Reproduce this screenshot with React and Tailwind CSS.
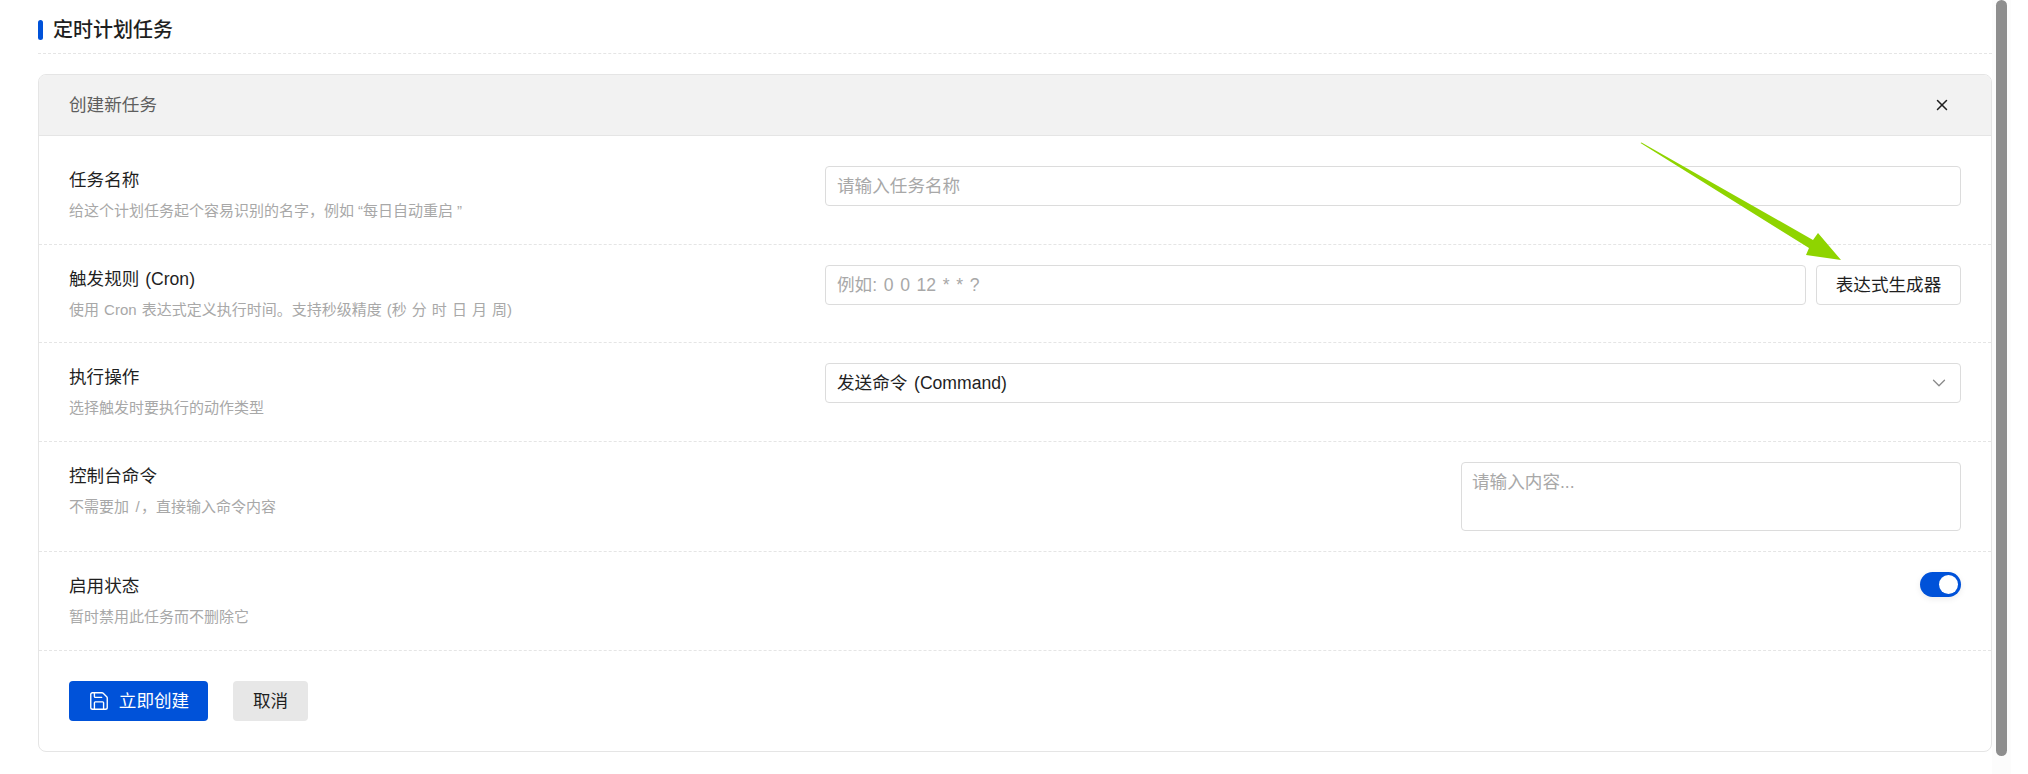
import React from "react";
import { Save, ChevronDown, X } from "lucide-react";

const font = "font-['Liberation_Sans','Noto_Sans_CJK_SC',sans-serif]";

function Row({ label, desc, children, className = "pt-[20px]" }) {
  return (
    <div className={`flex justify-between border-b border-dashed border-[#e5e5e5] px-[30px] ${className}`}>
      <div className="flex flex-col">
        <div className="text-[17.6px] leading-[28px] text-[#1f1f1f] [word-spacing:0.05em]">{label}</div>
        <div className="mt-[6px] text-[15px] leading-[22px] text-[#a8a8a8] [word-spacing:0.06em]">{desc}</div>
      </div>
      {children}
    </div>
  );
}

const inputCls =
  "h-[40px] rounded-[4px] border border-[#dcdcdc] bg-white px-[11px] text-[17.6px] text-[#1f1f1f] outline-none placeholder:text-[#a8a8a8] [word-spacing:0.1em]";

export default function App() {
  return (
    <div className={`relative flex h-[774px] overflow-hidden bg-white ${font}`}>
      <main className="w-[1992px] shrink-0 pl-[38px]">
        <div className="flex h-[54px] items-start border-b border-dashed border-[#e5e5e5] pt-[20px]">
          <span className="h-[20px] w-[5px] rounded-full bg-[#0052d9]" />
          <h1 className="ml-[10px] text-[20px] leading-[20px] font-medium text-[#1f1f1f]">定时计划任务</h1>
        </div>

        <section className="mt-[20px] h-[678px] overflow-hidden rounded-[8px] border border-[#e5e5e5]">
          <header className="flex h-[61px] items-center justify-between border-b border-[#e5e5e5] bg-[#f2f2f2] pl-[30px] pr-[40px]">
            <span className="text-[17.6px] text-[#5e5e5e]">创建新任务</span>
            <X size={18} strokeWidth={2} className="text-[#1f1f1f]" />
          </header>

          <Row
            label="任务名称"
            desc={
              <>
                给这个计划任务起个容易识别的名字，例如
                <span className="inline-block w-[9px] text-right">“</span>
                每日自动重启
                <span className="inline-block w-[9px] text-right">”</span>
              </>
            }
            className="h-[109px] pt-[30px]"
          >
            <input className={`${inputCls} w-[1136px]`} placeholder="请输入任务名称" readOnly />
          </Row>

          <Row
            label="触发规则 (Cron)"
            desc="使用 Cron 表达式定义执行时间。支持秒级精度 (秒 分 时 日 月 周)"
            className="h-[98px] pt-[20px]"
          >
            <div className="flex gap-[10px]">
              <input className={`${inputCls} w-[981px]`} placeholder="例如: 0 0 12 * * ?" readOnly />
              <button className="h-[40px] w-[145px] rounded-[4px] border border-[#dcdcdc] bg-white text-[17.6px] text-[#1f1f1f]">
                表达式生成器
              </button>
            </div>
          </Row>

          <Row label="执行操作" desc="选择触发时要执行的动作类型" className="h-[99px] pt-[20px]">
            <div className={`${inputCls} flex w-[1136px] items-center justify-between !pr-[10px]`}>
              <span>发送命令 (Command)</span>
              <ChevronDown size={22} strokeWidth={1.4} className="text-[#8a8a8a]" />
            </div>
          </Row>

          <Row
            label="控制台命令"
            desc={
              <>
                不需要加 <span className="inline-block w-[7px] text-center">/</span>，直接输入命令内容
              </>
            }
            className="h-[110px] pt-[20px]"
          >
            <textarea
              className={`${inputCls} h-[69px] w-[500px] resize-none !px-[10px] py-[6px] leading-[26px]`}
              placeholder="请输入内容..."
              readOnly
            />
          </Row>

          <Row label="启用状态" desc="暂时禁用此任务而不删除它" className="h-[99px] pt-[20px]">
            <div className="flex h-[25px] w-[41px] items-center justify-end rounded-full bg-[#0052d9] pr-[3px] shadow-[0_2px_6px_rgba(0,0,0,0.08)]">
              <span className="h-[19px] w-[19px] rounded-full bg-white" />
            </div>
          </Row>

          <div className="flex gap-[25px] px-[30px] pt-[30px]">
            <button className="flex h-[40px] w-[139px] items-center justify-center gap-[9px] rounded-[4px] bg-[#0052d9] text-[17.6px] text-white">
              <Save size={22} strokeWidth={1.5} />
              立即创建
            </button>
            <button className="h-[40px] w-[75px] rounded-[4px] bg-[#e7e7e7] text-[17.6px] text-[#1f1f1f]">取消</button>
          </div>
        </section>
      </main>

      <div className="h-full w-[19px] shrink-0 bg-[#fcfcfc] px-[4px]">
        <div className="h-[756px] rounded-full bg-[#8e8e8e]" />
      </div>

      <svg className="pointer-events-none absolute top-0 left-0" width="2028" height="774" fill="none">
        <polygon points="1640.5,143 1641.5,142.5 1813,240 1818,233 1841,260 1806,255 1809,248" fill="#8fd400" />
      </svg>
    </div>
  );
}
